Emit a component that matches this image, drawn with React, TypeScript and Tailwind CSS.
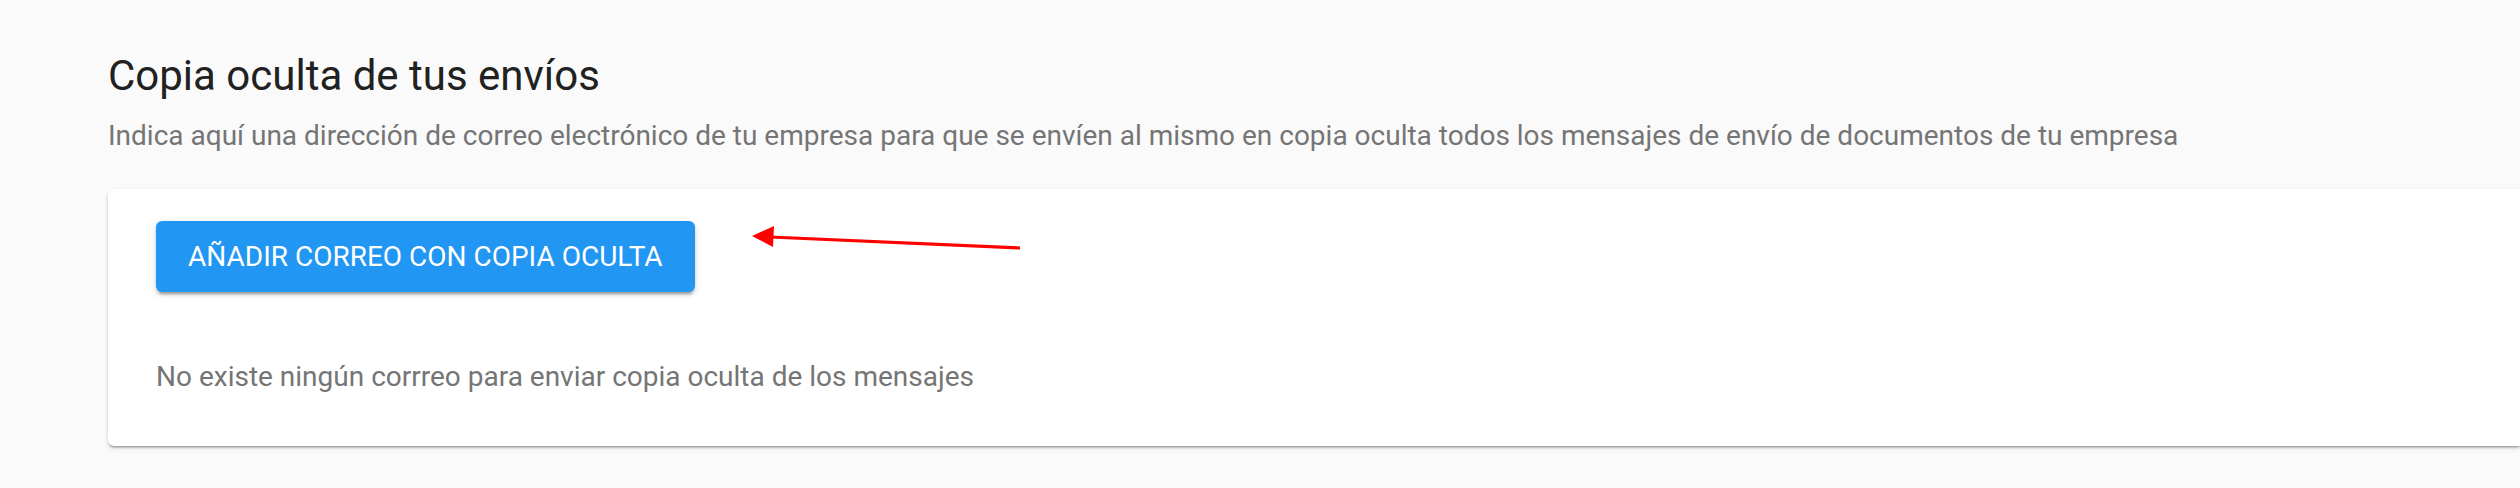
export default function App() {
  return (
    <div className="relative min-h-screen bg-[#fafafa] font-['Roboto','Liberation_Sans',sans-serif]">
      <div className="pl-[108px] pt-[51px]">
        <h1 className="text-[42px] leading-[50px] font-normal text-[#212121]">Copia oculta de tus envíos</h1>
        <p className="mt-[14px] text-[28px] leading-[42px] text-[#757575]">
          Indica aquí una dirección de correo electrónico de tu empresa para que se envíen al mismo en copia oculta todos
          los mensajes de envío de documentos de tu empresa
        </p>
        <div className="mt-[32px] h-[257px] rounded-l-[6px] bg-white px-[48px] pt-[32px] shadow-[0_3px_2px_-2px_rgba(0,0,0,0.2),0_2px_2px_0_rgba(0,0,0,0.14),0_2px_5px_0_rgba(0,0,0,0.12)]">
          <button className="flex h-[71px] items-center rounded-[6px] bg-[#2196f3] px-[32px] text-[28px] leading-[32px] font-normal uppercase text-white shadow-[0_5px_2px_-3px_rgba(0,0,0,0.2),0_3px_3px_0_rgba(0,0,0,0.14),0_2px_8px_0_rgba(0,0,0,0.12)]">
            Añadir correo con copia oculta
          </button>
          <p className="mt-[64px] text-[28px] leading-[42px] text-[#757575]">
            No existe ningún corrreo para enviar copia oculta de los mensajes
          </p>
        </div>
      </div>

      {/* red annotation arrow pointing at the button */}
      <svg className="absolute left-[740px] top-[216px]" width="300" height="50" viewBox="740 216 300 50">
        <line x1="770" y1="237" x2="1020" y2="248" stroke="#ff0000" strokeWidth="3.2" />
        <polygon points="752,236 774,226 773,247" fill="#ff0000" />
      </svg>
    </div>
  );
}
